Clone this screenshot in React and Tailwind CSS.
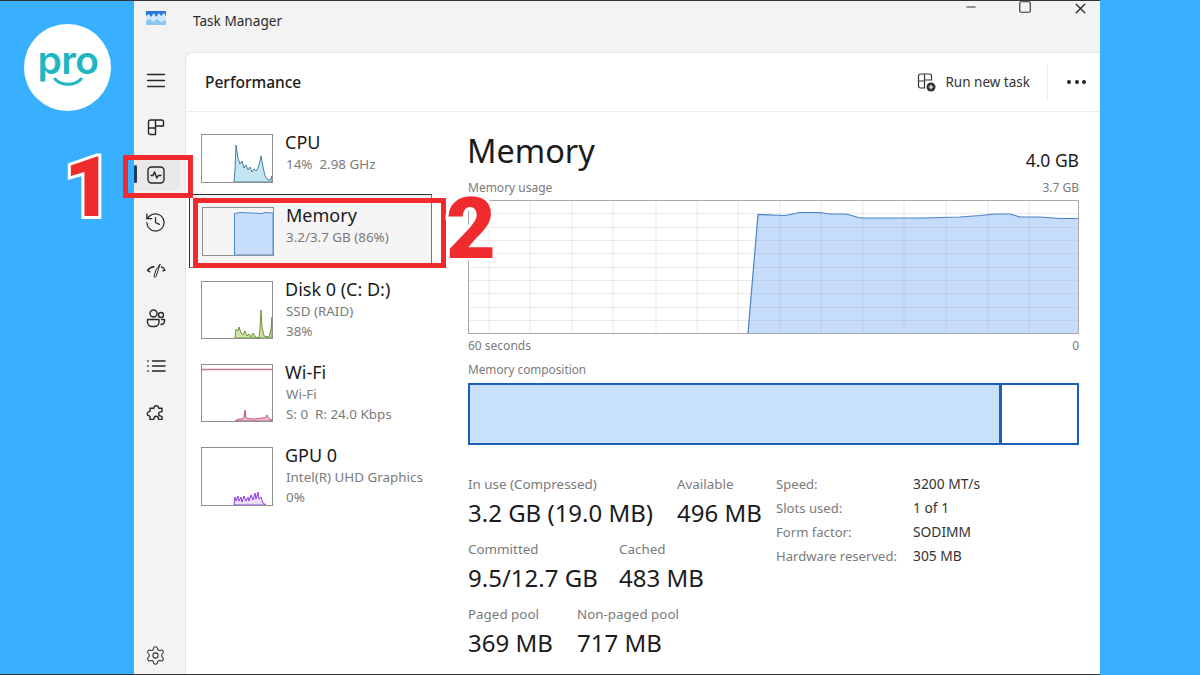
import React from 'react';
import { History, Settings, X, Minus, Square } from 'lucide-react';

const FONT = "font-['Noto_Sans',sans-serif]";

function NavIcon({ children, active }) {
  return (
    <div className={`relative h-[33px] w-[46px] flex items-center justify-center pr-[3px] rounded-[4px] text-[#262626] ${active ? 'bg-[#e9e9e9]' : ''}`}>
      {active && <div className="absolute left-0 top-[7px] h-[18px] w-[3px] rounded bg-[#1b3a5c]" />}
      {children}
    </div>
  );
}

function IconSvg({ children, sw = 1.4 }) {
  return (
    <svg width="20" height="20" viewBox="0 0 20 20" fill="none" stroke="currentColor" strokeWidth={sw} strokeLinecap="round" strokeLinejoin="round">
      {children}
    </svg>
  );
}

function Thumb({ h = 49, children }) {
  return (
    <svg width="72" height={h} viewBox={`0 0 72 ${h}`} className="block">
      {children}
      <rect x="0.5" y="0.5" width="71" height={h - 1} fill="none" stroke="#8f8f8f" />
    </svg>
  );
}

function SideItem({ thumb, title, lines, selected, h }) {
  return (
    <div className={`flex ${selected ? 'ml-[3px] w-[243px] border border-[#333] border-r-[#777] border-b-[#777] bg-[#f5f5f5] pl-[12px] pt-[12px] h-[74px]' : 'pl-[15px]'}`} style={h ? { height: h } : undefined}>
      <div className={`shrink-0 ${selected ? 'w-[84px]' : 'w-[85px]'}`}>{thumb}</div>
      <div className="mt-[-4px]">
        <div className={`text-[18px] leading-[24px] text-[#1b1b1b] whitespace-nowrap ${selected ? '' : 'ml-[-1px]'}`}>{title}</div>
        {lines.map((l) => (
          <div key={l} className="text-[13.4px] leading-[20px] text-[#7a7a7a] whitespace-pre">{l}</div>
        ))}
      </div>
    </div>
  );
}

function Stat({ label, value, className }) {
  return (
    <div className={className}>
      <div className="text-[13.4px] leading-[18px] text-[#7a7a7a] whitespace-nowrap">{label}</div>
      <div className="mt-[4px] text-[24px] leading-[32px] text-[#1b1b1b] whitespace-nowrap">{value}</div>
    </div>
  );
}

const gridX = [21, 62, 104, 145, 188, 229, 270, 312, 353, 395, 436, 478, 520, 561];
const gridY = [13, 27, 40, 53, 67, 80, 93, 107, 120];
const usageLine = 'M280 133L290 14.5L317 15.5L322 14.5L332 12.5L352 12.5L362 14L377 14L382 15L392 18H457L472 17.5L492 17L512 15.5L527 14L542 14L552 17L572 17L592 18.5L611 18.5';

export default function App() {
  return (
    <div className={`relative flex h-[675px] w-[1200px] overflow-hidden bg-[#38b0ff] ${FONT}`}>
      {/* window */}
      <div className="ml-[134px] flex h-full w-[966px] flex-col bg-[#f3f3f3]">
        <div className="flex h-[52px] shrink-0 items-start">
          <div className="ml-[12px] mt-[11px] w-[47px]">
            <svg width="20" height="14" viewBox="0 0 20 14" className="block">
              <rect width="20" height="14" fill="#2a78d2" />
              <path d="M0 5l3-2 2 3 3-4 2 4 3-4 2 3 3-3 2 3v9H0z" fill="#cfe8fb" />
              <path d="M0 10l4-2 3 3 4-3 4 3 5-2v5H0z" fill="#8cc6f4" />
            </svg>
          </div>
          <div className="mt-[11px] text-[13.6px] leading-[20px] text-[#2b2b2b]">Task Manager</div>
          <div className="ml-auto mr-[11px] flex items-start gap-[40px] text-[#333]">
            <Minus size={14} />
            <Square size={14} />
            <X size={17} />
          </div>
        </div>
        <div className="flex min-h-0 flex-1">
          {/* nav rail */}
          <div className="flex w-[51px] shrink-0 flex-col">
            <div className="mt-[11px] flex flex-col gap-[14.7px]">
              <NavIcon>
                <IconSvg sw={1.3}>
                  <path d="M1.500 4.500H18.500M1.500 10.500H18.500M1.500 16.500H18.500" />
                </IconSvg>
              </NavIcon>
              <NavIcon>
                <IconSvg>
                  <path d="M2.500 5a2 2 0 0 1 2-2h5v8h-7zM9.500 3h6a2 2 0 0 1 2 2v4h-8zM2.500 11h7v6.500h-5a2 2 0 0 1-2-2z" />
                </IconSvg>
              </NavIcon>
              <NavIcon active>
                <IconSvg>
                  <rect x="2" y="2" width="16" height="16" rx="3.500" />
                  <path d="M5 10.500h2l1.500-3.500 2.300 6 1.500-2.500h2.700" />
                </IconSvg>
              </NavIcon>
              <NavIcon><History size={23} strokeWidth={1.3} /></NavIcon>
              <NavIcon>
                <IconSvg>
                  <path d="M1.500 10.500C3 8.300 5.200 7 8 6.800M1.500 10.500l2.300 1.300M15.500 6.800c1.500.7 2.800 1.900 3.500 3.400M19 10.200l-2 .6" />
                  <path d="M14 4.500L10 16.500c-.5 1.400-2.300.8-1.900-.6L9.800 10.500z" strokeWidth="1" />
                </IconSvg>
              </NavIcon>
              <NavIcon>
                <IconSvg>
                  <circle cx="7.500" cy="5.500" r="3.500" />
                  <circle cx="15" cy="7" r="2.500" />
                  <path d="M1.500 11.500h11.500v2.500a4.500 4.500 0 0 1-4.500 4.500h-2.500a4.500 4.500 0 0 1-4.500-4.500zM15.500 11.500h3v1.500a3.500 3.500 0 0 1-3.500 3.500" />
                </IconSvg>
              </NavIcon>
              <NavIcon>
                <IconSvg sw={1.6}>
                  <path d="M6.500 5H19M6.500 10H19M6.500 15H19M1.800 5h.4M1.800 10h.4M1.800 15h.4" />
                </IconSvg>
              </NavIcon>
              <NavIcon>
                <IconSvg>
                  <path d="M8 4.500a2.300 2.300 0 0 1 4.500 0c0 .5 0 .8.5 .8h3v3.200c-.2.5-.8.4-1.200.4a2 2 0 0 0 0 4.200c.4 0 1 0 1.200.3v3h-3.300c-.4-.2-.3-.7-.3-1a2.200 2.200 0 0 0-4.400 0c0 .3.1.8-.3 1H4v-3.200c-.2-.4-.7-.2-1-.3a2.200 2.200 0 0 1 0-4.300c.3 0 .8.1 1-.3V5.300h3.400c.4 0 .6-.3.6-.8z" />
                </IconSvg>
              </NavIcon>
            </div>
            <div className="mb-[9px] mt-auto flex w-[43px] justify-center text-[#333]">
              <Settings size={21} strokeWidth={1.2} />
            </div>
          </div>

          {/* content card */}
          <div className="flex min-w-0 flex-1 flex-col rounded-tl-[8px] border-l border-t border-[#e5e5e5] bg-white">
            <div className="flex h-[59px] shrink-0 items-center border-b border-[#ececec] pl-[19px]">
              <div className="pt-[2px] text-[15.5px] font-medium text-[#1b1b1b]">Performance</div>
              <div className="ml-auto flex items-center">
                <svg width="20" height="20" viewBox="0 0 20 20" fill="none" stroke="#333" strokeWidth="1.2" className="mr-[9px]">
                  <path d="M2.500 4a2 2 0 0 1 2-2h4v7h-6zM8.500 2h5a2 2 0 0 1 2 2v4h-7zM2.500 9h6v7h-4a2 2 0 0 1-2-2z" />
                  <circle cx="15" cy="15" r="4.500" fill="#333" stroke="none" />
                  <path d="M15 12.800v4.400M12.800 15h4.400" stroke="#fff" />
                </svg>
                <div className="text-[13.5px] text-[#333]">Run new task</div>
                <div className="ml-[17px] h-[36px] w-px bg-[#ececec]" />
                <div className="ml-[19px] mr-[14px] flex gap-[3.500px]">
                  <div className="h-[4px] w-[4px] rounded-full bg-[#222]" />
                  <div className="h-[4px] w-[4px] rounded-full bg-[#222]" />
                  <div className="h-[4px] w-[4px] rounded-full bg-[#222]" />
                </div>
              </div>
            </div>

            <div className="flex min-h-0 flex-1">
              {/* device list */}
              <div className="flex w-[282px] shrink-0 flex-col pt-[22px]">
                <SideItem
                  h={60}
                  title="CPU"
                  lines={['14%  2.98 GHz']}
                  thumb={
                    <Thumb>
                      <path d="M33 48L34 36L35 11L37 24L39 30L41 27L43 34L45 31L47 36L49 33L51 38L53 35L55 37L57 34L59 27L60 22L62 33L64 42L66 45L68 46L70 45L71 42V48Z" fill="#c3e6f2" stroke="#35758c" strokeWidth="0.9" />
                    </Thumb>
                  }
                />
                <SideItem
                  selected
                  title="Memory"
                  lines={['3.2/3.7 GB (86%)']}
                  thumb={
                    <Thumb>
                      <path d="M32.500 48V6.500L38 5.500L50 6L60 6.500L63 5.500L71 6V48Z" fill="#c6defb" stroke="#4f86d0" strokeWidth="1" />
                    </Thumb>
                  }
                />
                <div className="h-[13px]" />
                <SideItem
                  h={83}
                  title="Disk 0 (C: D:)"
                  lines={['SSD (RAID)', '38%']}
                  thumb={
                    <Thumb h={58}>
                      <path d="M34 57L35 48L37 50L38 46L40 52L42 54L44 50L46 55L48 53L50 56L52 52L54 56L58 57L59 48L60 29L61 46L63 55L68 56L70 48L71 36V57Z" fill="#cfe6a8" stroke="#5e8a2c" strokeWidth="0.9" />
                    </Thumb>
                  }
                />
                <SideItem
                  h={83}
                  title="Wi-Fi"
                  lines={['Wi-Fi', 'S: 0  R: 24.0 Kbps']}
                  thumb={
                    <Thumb h={58}>
                      <path d="M0 5.500H72" stroke="#c37a9c" strokeWidth="1.400" />
                      <path d="M34 57L38 55L42 55L43 53L44 46L45 54L49 55L55 55L60 54L64 54L66 51L68 55L71 56V57Z" fill="#f2c4d6" stroke="#c2406f" strokeWidth="0.9" />
                    </Thumb>
                  }
                />
                <SideItem
                  title="GPU 0"
                  lines={['Intel(R) UHD Graphics', '0%']}
                  thumb={
                    <Thumb h={59}>
                      <path d="M33 58L34 50L35 54L37 49L38 54L40 50L41 55L43 49L45 54L47 50L48 54L50 48L52 53L54 46L55 52L57 45L58 52L60 50L62 56L65 58Z" fill="#e9dcfa" stroke="#8a3fe0" strokeWidth="1" />
                    </Thumb>
                  }
                />
              </div>

              {/* detail */}
              <div className="flex w-[611px] shrink-0 flex-col">
                <div className="mt-[16px] flex items-end justify-between">
                  <div className="ml-[-1px] text-[32.5px] leading-[46px] text-[#1b1b1b]">Memory</div>
                  <div className="mb-[2px] text-[17.5px] leading-[24px] text-[#1b1b1b]">4.0 GB</div>
                </div>
                <div className="mt-[5px] flex justify-between text-[12px] leading-[18px] text-[#7a7a7a]">
                  <span>Memory usage</span>
                  <span>3.7 GB</span>
                </div>
                <svg className="mt-[3px] block" width="611" height="134" viewBox="0 0 611 134">
                  <path d={`${usageLine}V133Z`} fill="#c5dcfb" />
                  {gridX.map((x) => <path key={x} d={`M${x} 0V134`} stroke="#9a9a9a" strokeOpacity="0.2" />)}
                  {gridY.map((y) => <path key={y} d={`M0 ${y + 0.5}H611`} stroke="#9a9a9a" strokeOpacity="0.2" />)}
                  <path d={usageLine} fill="none" stroke="#4c82c9" strokeWidth="1.200" />
                  <rect x="0.500" y="0.500" width="610" height="133" fill="none" stroke="#a9a9a9" />
                </svg>
                <div className="mt-[3px] flex justify-between text-[12px] leading-[18px] text-[#7a7a7a]">
                  <span>60 seconds</span>
                  <span>0</span>
                </div>
                <div className="mt-[5px] text-[11.8px] leading-[18px] text-[#7a7a7a]">Memory composition</div>
                <div className="mt-[5px] flex h-[62px] border-2 border-[#1b5fb8]">
                  <div className="w-[532px] border-r-[3px] border-[#1b5fb8] bg-[#c9e0fc]" />
                </div>

                <div className="mt-[30px] flex">
                  <div className="w-[308px]">
                    <div className="flex">
                      <Stat label="In use (Compressed)" value="3.2 GB (19.0 MB)" className="w-[209px]" />
                      <Stat label="Available" value="496 MB" />
                    </div>
                    <div className="mt-[11px] flex">
                      <Stat label="Committed" value="9.5/12.7 GB" className="w-[151px]" />
                      <Stat label="Cached" value="483 MB" />
                    </div>
                    <div className="mt-[11px] flex">
                      <Stat label="Paged pool" value="369 MB" className="w-[109px]" />
                      <Stat label="Non-paged pool" value="717 MB" />
                    </div>
                  </div>
                  <div className="grid grid-cols-[137px_1fr] self-start leading-[24px] mt-[-3px]">
                    {[
                      ['Speed:', '3200 MT/s'],
                      ['Slots used:', '1 of 1'],
                      ['Form factor:', 'SODIMM'],
                      ['Hardware reserved:', '305 MB'],
                    ].map(([k, v]) => (
                      <React.Fragment key={k}>
                        <span className="text-[13.1px] text-[#7a7a7a] whitespace-nowrap">{k}</span>
                        <span className="text-[13.8px] text-[#333] whitespace-nowrap">{v}</span>
                      </React.Fragment>
                    ))}
                  </div>
                </div>
              </div>
            </div>
          </div>
        </div>
      </div>

      {/* logo badge */}
      <div className="absolute left-[24px] top-[24px] flex h-[87px] w-[87px] flex-col items-center rounded-full bg-white">
        <div className="ml-[1px] mt-[13px] font-['Inter',sans-serif] text-[39px] font-semibold leading-[46px] tracking-[-0.5px] text-[#1fb6c1]">pro</div>
        <svg className="absolute left-[29px] top-[53px]" width="30" height="12" viewBox="0 0 30 12" fill="none">
          <path d="M2 2C8 9 22 9 28 2" stroke="#1fb6c1" strokeWidth="3" strokeLinecap="round" />
        </svg>
      </div>

      {/* red annotations */}
      <div className="absolute left-[123px] top-[155px] h-[43px] w-[70px] border-[5px] border-[#ef2b2d]" />
      <div className="absolute left-[193px] top-[198px] h-[70px] w-[253px] border-[5px] border-[#ef2b2d]" />
      <div className="absolute left-[64px] top-[158px] font-['Roboto',sans-serif] text-[84px] font-black leading-[60px] text-[#ef2b2d] [-webkit-text-stroke:6px_white] [paint-order:stroke_fill]">1</div>
      <div className="absolute left-[446px] top-[199px] font-['Roboto',sans-serif] text-[86px] font-black leading-[60px] text-[#ef2b2d] [-webkit-text-stroke:6px_white] [paint-order:stroke_fill]">2</div>

      {/* screenshot edge lines */}
      <div className="absolute left-0 top-0 h-px w-[1100px] bg-[#333]" />
      <div className="absolute bottom-0 left-0 h-px w-[1100px] bg-[#333]" />
    </div>
  );
}
